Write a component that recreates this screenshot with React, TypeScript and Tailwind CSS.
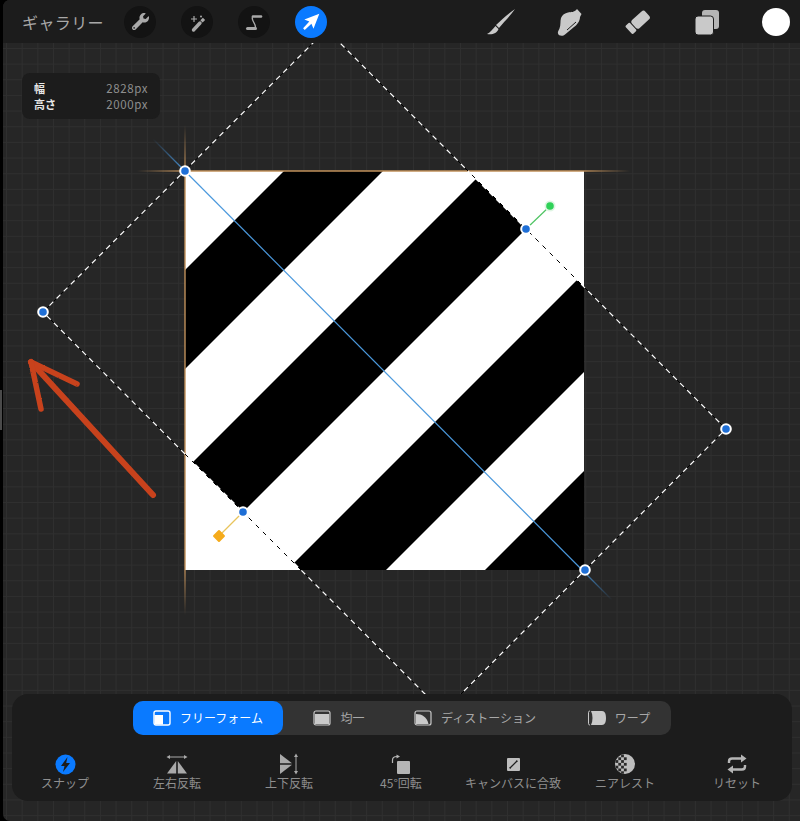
import { FaWrench } from "react-icons/fa";

const jp = "font-['Noto_Sans_CJK_JP','Noto_Sans',sans-serif]";

const ToolButton = ({ children, active }: { children: React.ReactNode; active?: boolean }) => (
    <div className={`flex h-[32px] w-[32px] items-center justify-center rounded-full ${active ? "bg-[#0a7aff]" : "bg-[#131313]"}`}>
        {children}
    </div>
);

const WandIcon = () => (
    <svg width="22" height="22" viewBox="0 0 22 22" fill="none">
        <path d="M7.5 19 L14 12" stroke="#a9a9a9" strokeWidth="3.4" strokeLinecap="round" />
        <path d="M15.5 10.4 L18 7.8" stroke="#a9a9a9" strokeWidth="3.2" />
        <path d="M8 5 V11 M5 8 H11" stroke="#a9a9a9" strokeWidth="1.2" />
        <circle cx="15" cy="5.5" r="1" fill="#a9a9a9" />
    </svg>
);

const SIcon = () => (
    <svg width="22" height="22" viewBox="0 0 22 22" fill="none">
        <path d="M10 5.5 H18" stroke="#a9a9a9" strokeWidth="2.6" strokeLinecap="round" />
        <path d="M9.5 6 C8 10 13 12 12.5 17" stroke="#a9a9a9" strokeWidth="1.4" />
        <path d="M4.5 17.5 H12.5" stroke="#a9a9a9" strokeWidth="3" strokeLinecap="round" />
    </svg>
);

const ArrowIcon = () => (
    <svg width="20" height="20" viewBox="0 0 24 24" fill="white">
        <path d="M22 2 L4 9 L10 11.5 L2.5 19.5 L4.5 21.5 L12.5 14 L15 20 Z" />
    </svg>
);

const BrushIcon = () => (
    <svg width="30" height="30" viewBox="0 0 30 30" fill="#c9c9c9">
        <path d="M30 2 C26 8 19 15 14 21 L11 18 C16 13 24 6 30 2 Z" />
        <path d="M10.5 19 L13.5 22 C12 26.5 7 28 2 27 C5 26 7.5 22 10.5 19 Z" />
    </svg>
);

const SmudgeIcon = () => (
    <svg width="28" height="30" viewBox="0 0 28 30" fill="#c9c9c9">
        <path d="M22 2 L26.5 7 L25 10 C25 14 22 18 19 20 L10 27.5 C8 29.5 3.5 29 3 26.5 C2.5 25 3.5 23.5 4.5 21.5 C6 18 5 14 6 11 C7 8 10 6 13 5.5 C16 5 19 5.5 22 2 Z" />
        <path d="M12 23 L21 15" stroke="#1c1c1c" strokeWidth="1" />
    </svg>
);

const EraserIcon = () => (
    <svg width="28" height="26" viewBox="0 0 28 26" fill="#c9c9c9">
        <g transform="rotate(-42 14 13)">
            <rect x="1.5" y="7.5" width="6" height="11" rx="1.2" />
            <rect x="8.5" y="7.5" width="18" height="11" rx="2.8" />
        </g>
    </svg>
);

const LayersIcon = () => (
    <svg width="26" height="26" viewBox="0 0 26 26">
        <rect x="8" y="1" width="17" height="19" rx="3" fill="#b5b5b5" />
        <rect x="1" y="7" width="18.5" height="19" rx="3" fill="#c9c9c9" stroke="#1c1c1c" strokeWidth="1" />
    </svg>
);

const ShapeIcon = ({ kind, fill }: { kind: string; fill: string }) => (
    <svg width="18" height="16" viewBox="0 0 18 16">
        {kind === "free" && (
            <g>
                <rect x="1" y="1" width="16" height="14" rx="2" fill="none" stroke={fill} strokeWidth="1.4" />
                <rect x="1.5" y="5" width="8.5" height="9.5" fill={fill} />
            </g>
        )}
        {kind === "uniform" && (
            <g>
                <rect x="1" y="1" width="16" height="14" rx="2" fill="none" stroke={fill} strokeWidth="1.2" />
                <rect x="2" y="4" width="14" height="10" fill={fill} />
            </g>
        )}
        {kind === "distort" && (
            <g>
                <rect x="1" y="1" width="16" height="14" rx="2" fill="none" stroke={fill} strokeWidth="1.2" />
                <path d="M2 4 C8 4 13 7 14.5 14 H2 Z" fill={fill} />
            </g>
        )}
        {kind === "warp" && (
            <g>
                <path d="M3 1 H14 C17 1 18 4 18 8 C18 12 17 15 14 15 H3 C5 11 5 5 3 1 Z" fill={fill} />
                <path d="M2 1 C0.5 1 0.5 2 0.5 3 V13 C0.5 14 0.5 15 2 15" fill="none" stroke={fill} strokeWidth="1" />
            </g>
        )}
    </svg>
);

const BoltIcon = () => (
    <svg width="21" height="21" viewBox="0 0 21 21">
        <circle cx="10.5" cy="10.5" r="10" fill="#0a7aff" />
        <path d="M12.5 3 L6 12 H9.5 L8 18 L15 9 H11.2 Z" fill="#1c1c1c" />
    </svg>
);

const FlipHIcon = () => (
    <svg width="22" height="20" viewBox="0 0 22 20" fill="#a9a9a9">
        <path d="M2 3 H20" stroke="#a9a9a9" strokeWidth="1" />
        <path d="M0.5 3 L4 1 V5 Z M21.5 3 L18 1 V5 Z" />
        <path d="M10.2 7 V19.5 H1 Z" />
        <path d="M11.8 7 V19.5 H21 Z" />
    </svg>
);

const FlipVIcon = () => (
    <svg width="20" height="22" viewBox="0 0 20 22" fill="#a9a9a9">
        <path d="M1 1 L13 10.2 H1 Z" />
        <path d="M1 11.8 H13 L1 21 Z" />
        <path d="M17 3 V19" stroke="#a9a9a9" strokeWidth="1" />
        <path d="M17 0.5 L19 4 H15 Z M17 21.5 L19 18 H15 Z" />
    </svg>
);

const RotateIcon = () => (
    <svg width="20" height="20" viewBox="0 0 20 20" fill="#b5b5b5">
        <rect x="6" y="7" width="13" height="13" rx="1" />
        <path d="M1.5 9 V6 C1.5 3.5 3.5 2.5 6 2.5" fill="none" stroke="#b5b5b5" strokeWidth="1.2" />
        <path d="M9 2.5 L5.5 0.5 V4.5 Z" />
    </svg>
);

const FitIcon = () => (
    <svg width="13" height="13" viewBox="0 0 13 13">
        <rect width="13" height="13" rx="1" fill="#bdbdbd" />
        <path d="M3 10 L10 3" stroke="#1c1c1c" strokeWidth="1.2" />
        <path d="M2.5 10.5 h1.5 v-1.5 h-1.5 Z M9 4 h1.5 v-1.5 h-1.5 Z" fill="#1c1c1c" />
    </svg>
);

const NearestIcon = () => {
    const cells: [number, number][] = [];
    for (let y = 0; y < 7; y++) {
        for (let x = 0; x < 4; x++) {
            if ((x + y) % 2 === 0) cells.push([x * 2.8 + 0.5, y * 2.8 + 0.5]);
        }
    }
    return (
        <svg width="20" height="20" viewBox="0 0 20 20">
            <defs>
                <clipPath id="nearest-clip">
                    <circle cx="10" cy="10" r="10" />
                </clipPath>
            </defs>
            <circle cx="10" cy="10" r="10" fill="#bdbdbd" />
            <g clipPath="url(#nearest-clip)">
                {cells.map(([x, y], i) => (
                    <rect key={i} x={x} y={y} width="2.8" height="2.8" fill="#2a2a2a" />
                ))}
            </g>
        </svg>
    );
};

const ResetIcon = () => (
    <svg width="20" height="20" viewBox="0 0 20 20" fill="#b5b5b5">
        <path d="M2 9 V7.5 C2 5.5 3.5 4.5 5 4.5 H15" fill="none" stroke="#b5b5b5" strokeWidth="2.4" />
        <path d="M14 0.5 L19.5 4.5 L14 8.5 Z" />
        <path d="M18 11 V12.5 C18 14.5 16.5 15.5 15 15.5 H5" fill="none" stroke="#b5b5b5" strokeWidth="2.4" />
        <path d="M6 11.5 L0.5 15.5 L6 19.5 Z" />
    </svg>
);

const handles: [number, number][] = [
    [185, 171],
    [43, 312],
    [726, 429],
    [585, 570],
    [243, 512],
    [526, 229],
];

const Canvas = () => (
    <svg className="absolute left-0 top-0" width="800" height="821" viewBox="0 0 800 821">
        <defs>
            <linearGradient id="blue-line" gradientUnits="userSpaceOnUse" x1="153" y1="139" x2="612" y2="600">
                <stop offset="0" stopColor="#3f8ed8" stopOpacity="0" />
                <stop offset="0.07" stopColor="#4a98dc" />
                <stop offset="0.93" stopColor="#4a98dc" />
                <stop offset="1" stopColor="#3f8ed8" stopOpacity="0" />
            </linearGradient>
            <linearGradient id="orange-h" gradientUnits="userSpaceOnUse" x1="137" y1="171" x2="630" y2="171">
                <stop offset="0" stopColor="#c0905a" stopOpacity="0" />
                <stop offset="0.1" stopColor="#c0905a" />
                <stop offset="0.9" stopColor="#c0905a" />
                <stop offset="1" stopColor="#c0905a" stopOpacity="0" />
            </linearGradient>
            <linearGradient id="orange-v" gradientUnits="userSpaceOnUse" x1="185" y1="125" x2="185" y2="615">
                <stop offset="0" stopColor="#c0905a" stopOpacity="0" />
                <stop offset="0.1" stopColor="#c0905a" />
                <stop offset="0.9" stopColor="#c0905a" />
                <stop offset="1" stopColor="#c0905a" stopOpacity="0" />
            </linearGradient>
            <filter id="rough" x="-10%" y="-10%" width="120%" height="120%">
                <feTurbulence type="fractalNoise" baseFrequency="0.45" numOctaves="2" seed="3" />
                <feDisplacementMap in="SourceGraphic" scale="2.2" />
            </filter>
        </defs>

        <rect x="185" y="171" width="399" height="399" fill="white" />
        <polygon points="284,171 383,171 185,369 185,270" fill="black" />
        <polygon points="476,179 526,229 243,512 193,462" fill="black" />
        <polygon points="577,280 584,287 584,372 386,570 301,570 294,563" fill="black" />
        <polygon points="485,570 584,471 584,570" fill="black" />

        <line x1="137" y1="171" x2="630" y2="171" stroke="url(#orange-h)" strokeWidth="1.4" />
        <line x1="185" y1="125" x2="185" y2="615" stroke="url(#orange-v)" strokeWidth="1.4" />
        <line x1="153" y1="139" x2="612" y2="600" stroke="url(#blue-line)" strokeWidth="1.2" />

        <polygon points="326.5,29.5 726,429 443,712 43,312" fill="none" stroke="black" strokeWidth="1" />
        <polygon points="326.5,29.5 726,429 443,712 43,312" fill="none" stroke="white" strokeWidth="1.2" strokeDasharray="5.5 4.5" />

        <line x1="526" y1="229" x2="550" y2="206" stroke="#4fc463" strokeWidth="1.2" />
        <circle cx="550" cy="206" r="5.5" fill="#dff5e3" />
        <circle cx="550" cy="206" r="3.8" fill="#2fd158" />
        <line x1="243" y1="512" x2="219" y2="536" stroke="#e8c45c" strokeWidth="1.2" />
        <rect x="214.5" y="531.5" width="9" height="9" rx="1" transform="rotate(45 219 536)" fill="#f5ab1b" />

        {handles.map(([x, y]) => (
            <g key={`${x}-${y}`}>
                <circle cx={x} cy={y} r="5.8" fill="white" />
                <circle cx={x} cy={y} r="3.8" fill="#1f6fd6" />
            </g>
        ))}

        <g fill="none" stroke="#c8421f" strokeLinecap="round" strokeLinejoin="round" filter="url(#rough)">
            <path d="M153 495 L31 362" strokeWidth="6" />
            <path d="M31 362 L77 384" strokeWidth="5.5" />
            <path d="M31 362 L41 409" strokeWidth="5.5" />
        </g>
    </svg>
);

const segments = [
    { kind: "uniform", label: "均一", width: "w-[112px]", extra: "" },
    { kind: "distort", label: "ディストーション", width: "w-[160px]", extra: "" },
    { kind: "warp", label: "ワープ", width: "w-[116px]", extra: "pl-[12px]" },
];

const actions = [
    { icon: <BoltIcon />, label: "スナップ" },
    { icon: <FlipHIcon />, label: "左右反転" },
    { icon: <FlipVIcon />, label: "上下反転" },
    { icon: <RotateIcon />, label: "45°回転" },
    { icon: <FitIcon />, label: "キャンバスに合致" },
    { icon: <NearestIcon />, label: "ニアレスト" },
    { icon: <ResetIcon />, label: "リセット" },
];

export default function App() {
    return (
        <div className={`relative h-[821px] w-[800px] overflow-hidden bg-black pl-[3px] ${jp}`}>
            <div className="absolute left-0 top-[390px] h-[40px] w-[2px] bg-[#4a4a4a]" />
            <div className="relative h-full overflow-hidden rounded-l-[7px] bg-[#262626] bg-[linear-gradient(to_right,#2f2f2f_1px,transparent_1px),linear-gradient(to_bottom,#2f2f2f_1px,transparent_1px)] bg-[size:15.67px_15.67px] bg-[position:3px_1px]">
                <div className="absolute left-[-3px] top-0">
                    <Canvas />
                </div>

                <div className="absolute left-[19px] top-[73px] flex h-[46px] w-[138px] flex-col justify-center gap-[1px] rounded-lg bg-[#1c1c1c] px-[12px] text-[11px] leading-[15px]">
                    <div className="flex justify-between">
                        <span className="font-bold text-[#e8e8e8]">幅</span>
                        <span className="text-[11.5px] tracking-[0.6px] text-[#8e8e8e]">2828px</span>
                    </div>
                    <div className="flex justify-between">
                        <span className="font-bold text-[#e8e8e8]">高さ</span>
                        <span className="text-[11.5px] tracking-[0.6px] text-[#8e8e8e]">2000px</span>
                    </div>
                </div>

                <div className="absolute left-0 right-0 top-0 flex h-[43px] items-center bg-[#1c1c1c] pl-[19px]">
                    <span className="w-[102px] text-[16px] tracking-[0.4px] text-[#a8a8a8]">ギャラリー</span>
                    <div className="flex gap-[25px]">
                        <ToolButton><FaWrench className="text-[17px] text-[#a9a9a9]" /></ToolButton>
                        <ToolButton><WandIcon /></ToolButton>
                        <ToolButton><SIcon /></ToolButton>
                        <ToolButton active><ArrowIcon /></ToolButton>
                    </div>
                    <div className="ml-auto flex items-center">
                        <div className="flex w-[70px] justify-center"><BrushIcon /></div>
                        <div className="flex w-[68px] justify-center"><SmudgeIcon /></div>
                        <div className="flex w-[69px] justify-center"><EraserIcon /></div>
                        <div className="flex w-[69px] justify-center"><LayersIcon /></div>
                        <div className="ml-[21px] mr-[10px] h-[28px] w-[28px] rounded-full bg-white" />
                    </div>
                </div>

                <div className="absolute left-[9px] top-[694px] h-[107px] w-[780px] rounded-[16px] bg-[#1c1c1c] pt-[7px]">
                    <div className="ml-[121px] flex h-[34px] w-[538px] rounded-[10px] bg-[#333333] text-[12px] text-[#a8a8a8]">
                        <div className="flex w-[150px] items-center justify-center gap-[9px] rounded-[10px] bg-[#0a7aff] pb-[1px] text-white">
                            <ShapeIcon kind="free" fill="white" />
                            <span>フリーフォーム</span>
                        </div>
                        {segments.map(s => (
                            <div key={s.label} className={`flex items-center justify-center gap-[9px] pb-[1px] ${s.width} ${s.extra}`}>
                                <ShapeIcon kind={s.kind} fill="#c9c9c9" />
                                <span>{s.label}</span>
                            </div>
                        ))}
                    </div>
                    <div className="-ml-[3px] mt-[17px] grid w-[784px] grid-cols-7">
                        {actions.map(a => (
                            <div key={a.label} className="flex flex-col items-center">
                                <div className="flex h-[24px] items-center justify-center">{a.icon}</div>
                                <span className="-mt-[1px] text-[12px] leading-[16px] text-[#8f8f8f]">{a.label}</span>
                            </div>
                        ))}
                    </div>
                </div>
            </div>
        </div>
    );
}
